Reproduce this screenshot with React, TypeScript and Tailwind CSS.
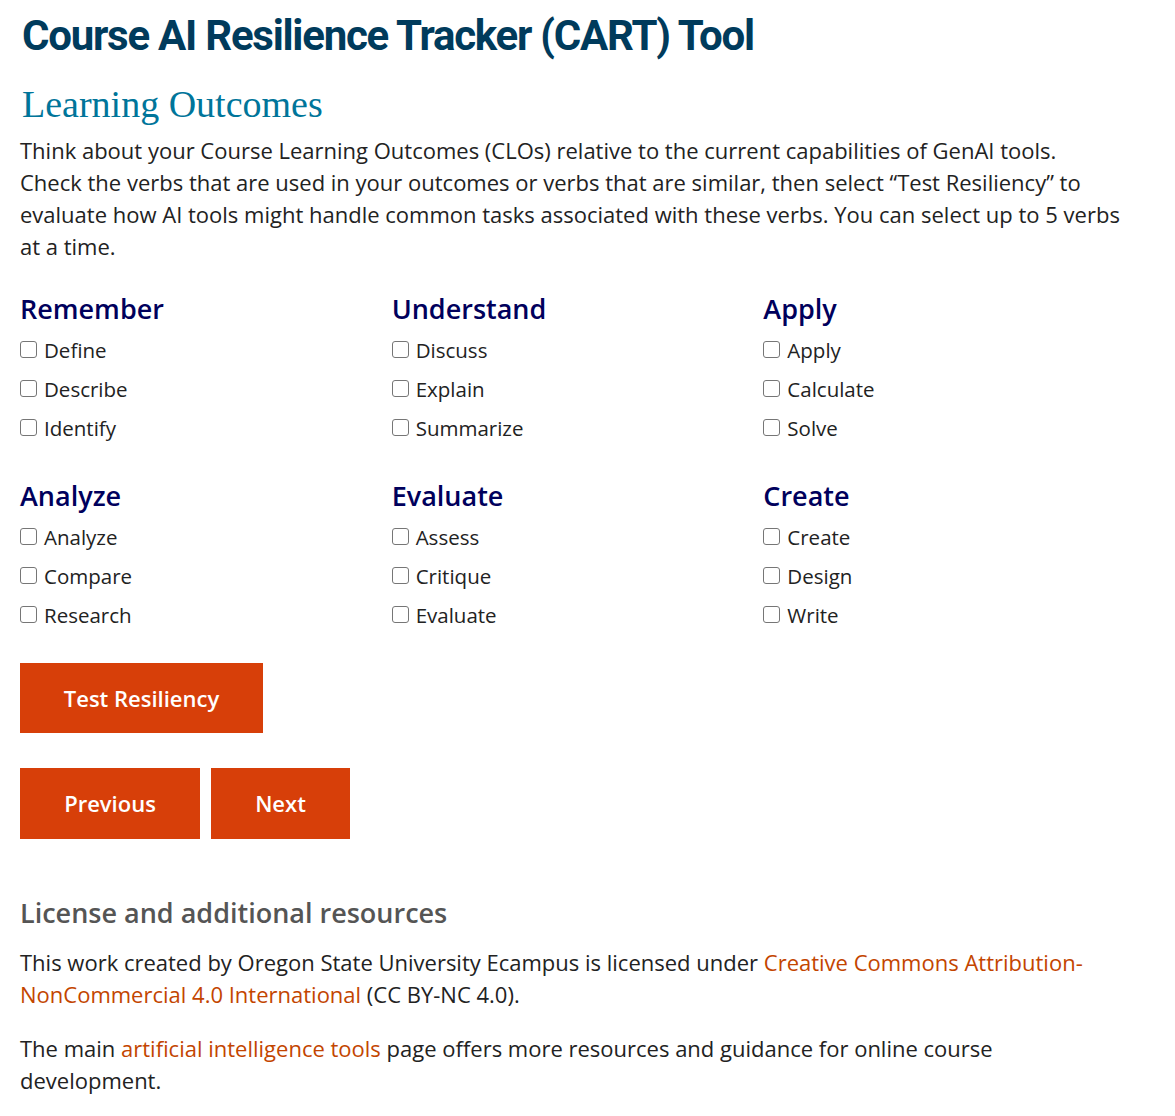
const groups = [
  { title: "Remember", verbs: ["Define", "Describe", "Identify"] },
  { title: "Understand", verbs: ["Discuss", "Explain", "Summarize"] },
  { title: "Apply", verbs: ["Apply", "Calculate", "Solve"] },
  { title: "Analyze", verbs: ["Analyze", "Compare", "Research"] },
  { title: "Evaluate", verbs: ["Assess", "Critique", "Evaluate"] },
  { title: "Create", verbs: ["Create", "Design", "Write"] },
];

const VerbGroup = ({ title, verbs }: { title: string; verbs: string[] }) => {
  return (
    <div className="flex flex-col">
      <h3 className="text-[27px] leading-[36px] font-semibold text-[#00005c] mb-[4px]">{title}</h3>
      {verbs.map((v) => (
        <label key={v} className="flex items-center h-[39px] text-[20.5px] text-[#222]">
          <input
            type="checkbox"
            className="appearance-none w-[17px] h-[17px] border border-[#767676] rounded-[3px] bg-white mr-[7px] shrink-0 -mt-[2px]"
          />
          {v}
        </label>
      ))}
    </div>
  );
};

export default function App() {
  return (
    <div className="bg-white min-h-[1116px] px-5 pt-[10px] font-['Open_Sans',sans-serif] text-[#222]">
      {/* header */}
      <h1 className="font-['Roboto',sans-serif] font-bold text-[42px] leading-[52px] tracking-[-1.25px] text-[#003b5c] pl-[2px]">
        Course AI Resilience Tracker (CART) Tool
      </h1>
      <h2 className="font-['Liberation_Serif',serif] text-[38px] leading-[44px] text-[#00759a] mt-[20px] pl-[2px]">
        Learning Outcomes
      </h2>

      <p className="text-[22px] leading-[32px] w-[1102px] mt-[8px]">
        Think about your Course Learning Outcomes (CLOs) relative to the current capabilities of GenAI tools. Check the verbs that are used in your outcomes or verbs that are similar, then select “Test Resiliency” to evaluate how AI tools might handle common tasks associated with these verbs. You can select up to 5 verbs at a time.
      </p>

      {/* verb grid */}
      <div className="grid grid-cols-3 w-[1115px] gap-y-[30px] mt-[29px]">
        {groups.map((g) => (
          <VerbGroup key={g.title} {...g} />
        ))}
      </div>

      <button className="mt-[28px] w-[243px] h-[70px] bg-[#d73f09] text-white font-semibold text-[22px] block">
        Test Resiliency
      </button>

      <div className="flex gap-[11px] mt-[35px]">
        <button className="w-[180px] h-[71px] bg-[#d73f09] text-white font-semibold text-[22px]">Previous</button>
        <button className="w-[139px] h-[71px] bg-[#d73f09] text-white font-semibold text-[22px]">Next</button>
      </div>

      {/* license */}
      <h2 className="mt-[56px] text-[27px] leading-[36px] font-semibold text-[#555]">
        License and additional resources
      </h2>
      <p className="text-[22px] leading-[32px] w-[1102px] mt-[15px]">
        This work created by Oregon State University Ecampus is licensed under{" "}
        <a className="text-[#c34500]" href="#">Creative Commons Attribution-NonCommercial 4.0 International</a>{" "}
        (CC BY-NC 4.0).
      </p>
      <p className="text-[22px] leading-[32px] w-[1102px] mt-[22px]">
        The main <a className="text-[#c34500]" href="#">artificial intelligence tools</a> page offers more resources and guidance for online course development.
      </p>
    </div>
  );
}
